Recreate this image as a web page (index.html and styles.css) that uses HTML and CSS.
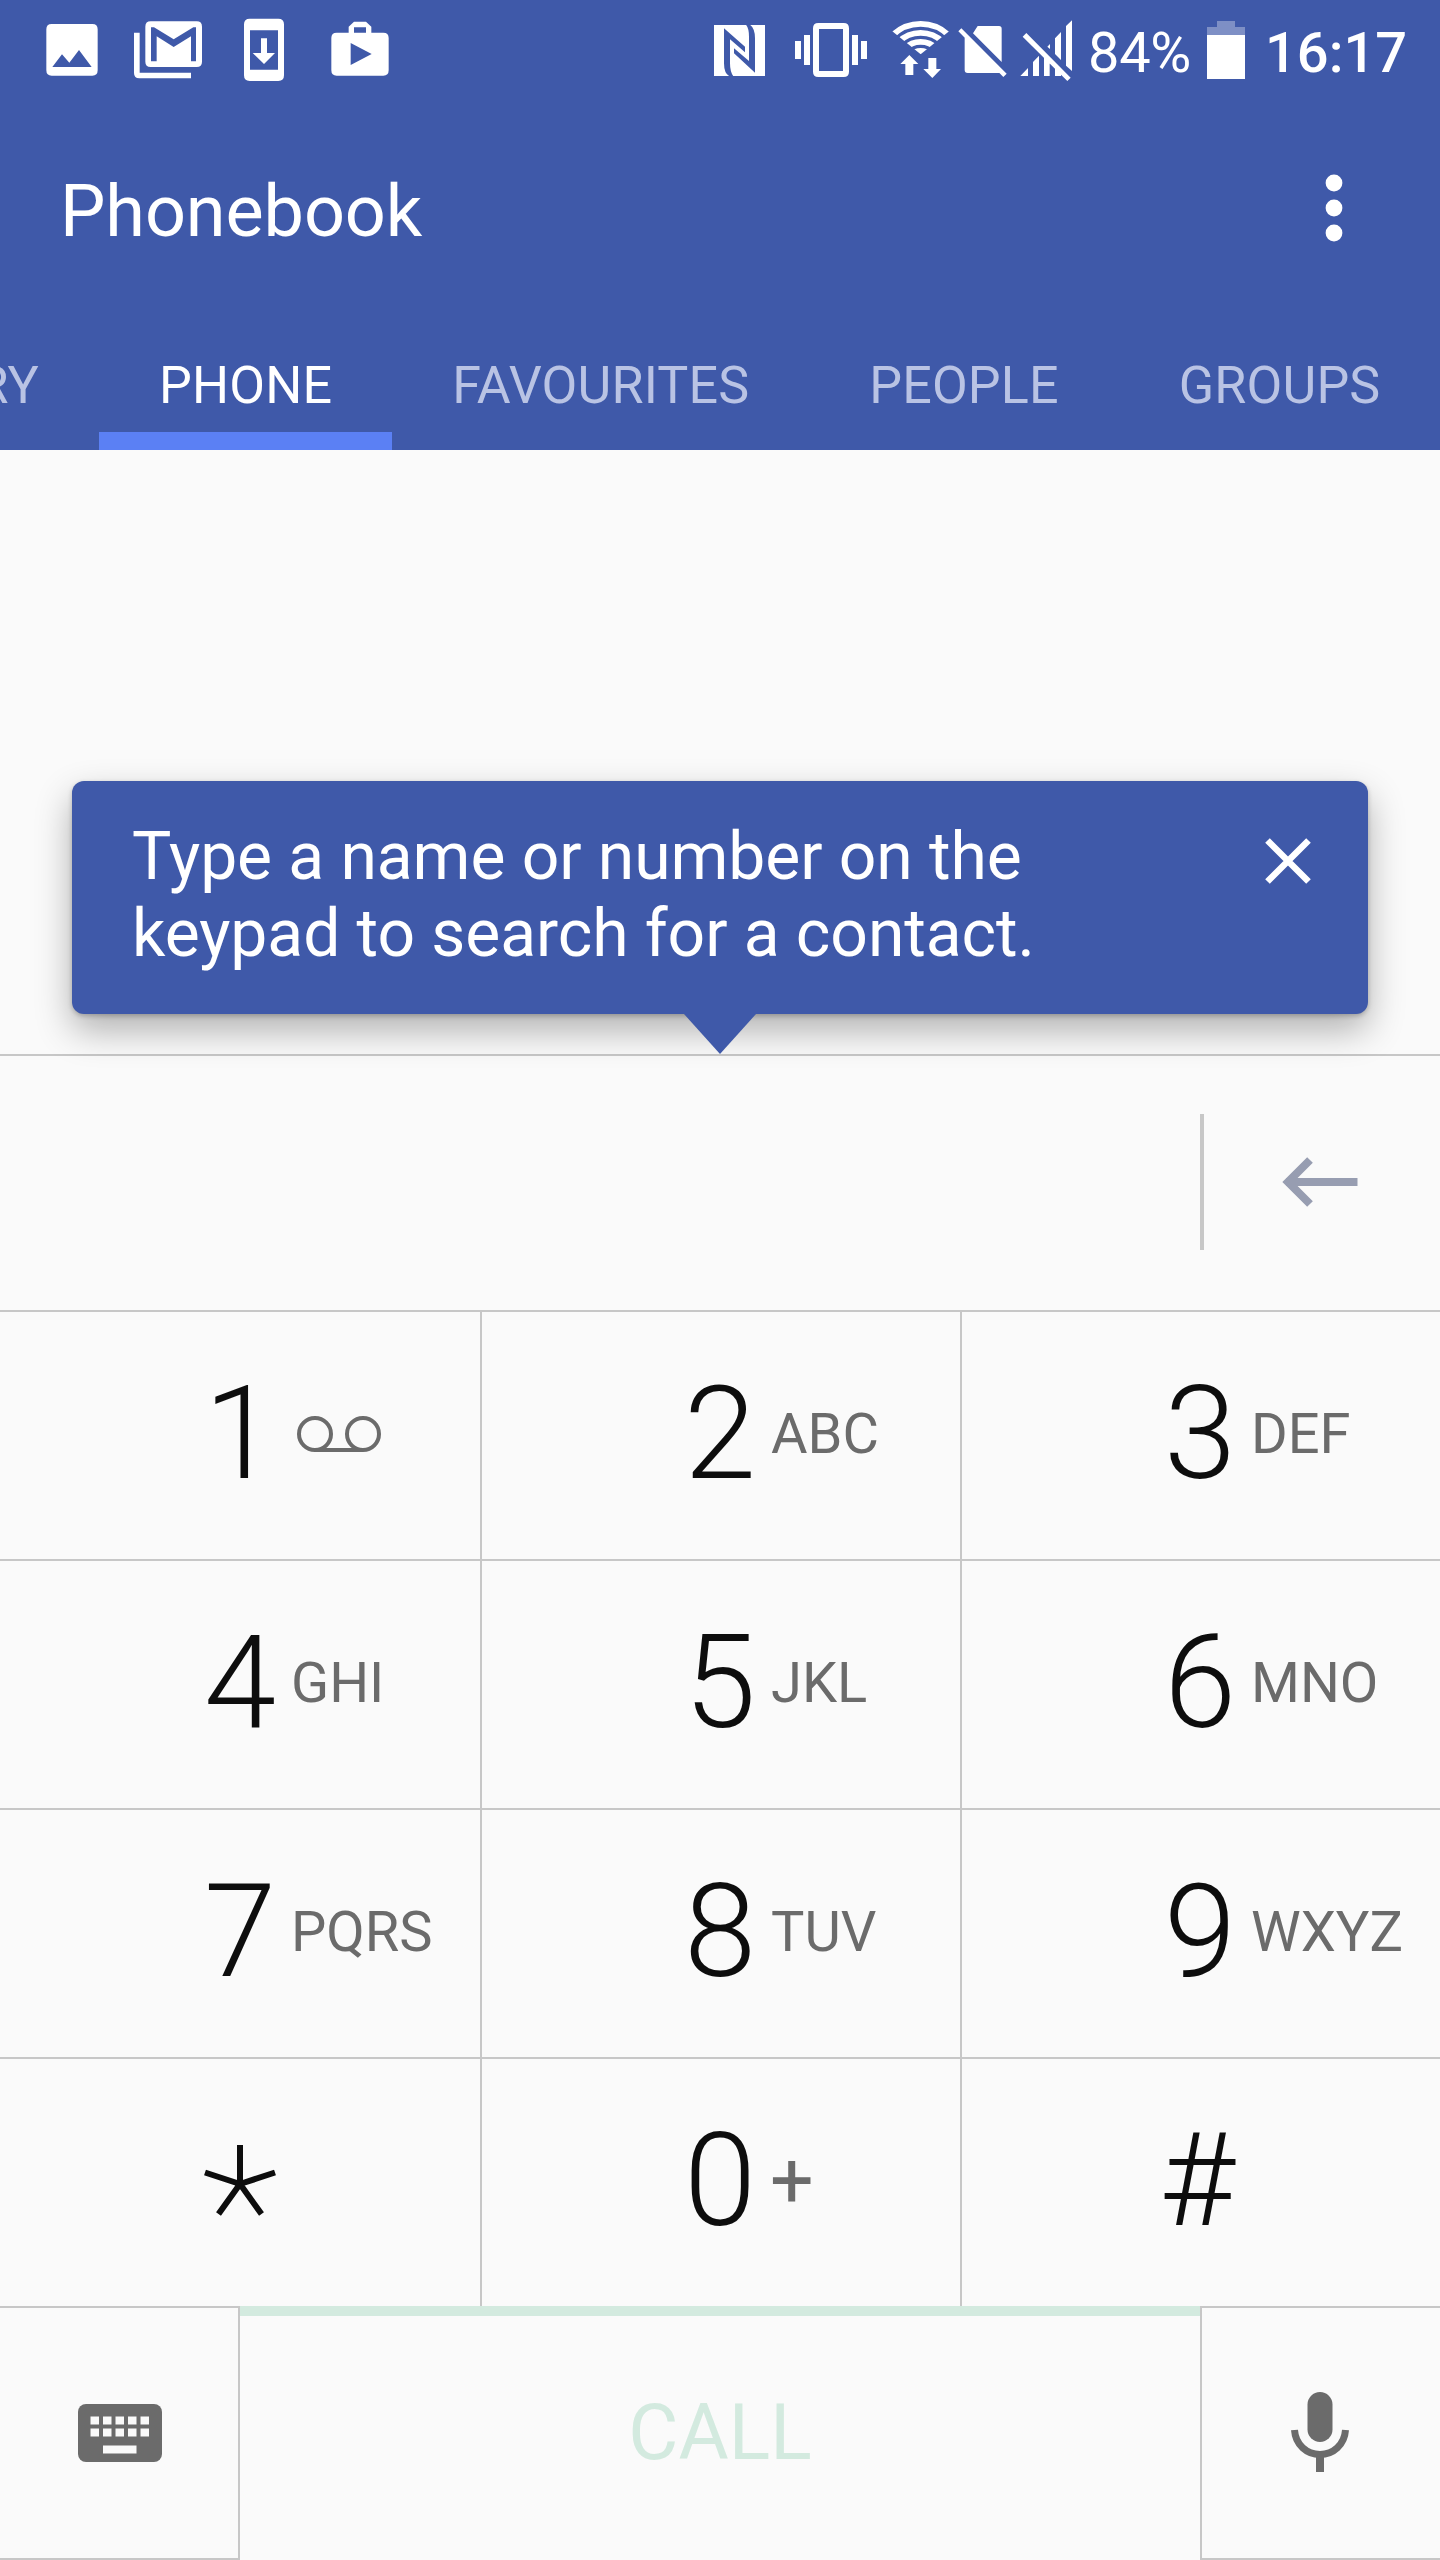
FILE: index.html
```html
<!DOCTYPE html>
<html lang="en">
<head>
<meta charset="utf-8">
<title>Phonebook</title>
<link rel="stylesheet" href="styles.css">
</head>
<body>
<div class="screen">
  <header class="header">
    <div class="status">
      <svg class="ic-photo" width="52" height="100" viewBox="138 0 156 300"><path fill-rule="evenodd" d="M155 72H277Q293 72 293 88V211Q293 227 277 227H155Q139 227 139 211V88Q139 72 155 72ZM157 201H275L237 150L208 188L186 163Z"/></svg>
      <svg class="ic-mail" width="68" height="100" viewBox="402 0 204 300"><path d="M402 98H419V218H573V235H418Q402 235 402 219Z"/><path fill-rule="evenodd" d="M452 64H590Q606 64 606 80V185Q606 201 590 201H452Q436 201 436 185V80Q436 64 452 64ZM453 82V184H470V109L521 141L573 109V184H588V82H580L521 118L462 82Z"/></svg>
      <svg class="ic-download" width="40" height="100" viewBox="732 0 120 300"><path fill-rule="evenodd" d="M749 56H835Q852 56 852 73V226Q852 243 835 243H749Q732 243 732 226V73Q732 56 749 56ZM750 91V209H834V91Z"/><path d="M783 115H801V159H825L792 192L758 159H783Z"/></svg>
      <svg class="ic-store" width="58" height="100" viewBox="993 0 174 300"><path fill-rule="evenodd" d="M1010 98H1046V80L1062 65H1098L1114 80V98H1150Q1166 98 1166 114V211Q1166 227 1150 227H1010Q994 227 994 211V114Q994 98 1010 98ZM1062 82V98H1098V82ZM1052 129V195L1115 162Z"/></svg>
      <span class="grow"></span>
      <svg class="ic-nfc" width="51" height="100" viewBox="42 0 153 300"><path d="M42 75H195V228H42Z"/><path class="cut" d="M72 85L135 140V157L90 118V190Q90 215 100 229H88Q72 220 72 190ZM165 218L102 160V145L147 183V110Q147 85 138 74H150Q165 85 165 115Z"/></svg>
      <svg class="ic-vibrate" width="72" height="100" viewBox="285 0 216 300"><path fill-rule="evenodd" d="M355 69H431Q447 69 447 85V215Q447 231 431 231H355Q339 231 339 215V85Q339 69 355 69ZM357 87V213H429V87Z"/><path d="M285 123H303V177H285ZM312 105H330V195H312ZM456 105H474V195H456ZM483 123H501V177H483Z"/></svg>
      <svg class="ic-wifi" width="58" height="100" viewBox="575 0 174 300">
        <clipPath id="fan"><path d="M661 163L537 62H785Z"/></clipPath>
        <g clip-path="url(#fan)"><g fill="none" stroke="#fff" stroke-width="17"><circle cx="661" cy="193" r="121.500"/><circle cx="661" cy="193" r="94.500"/><circle cx="661" cy="193" r="67.500"/></g><circle cx="661" cy="193" r="49"/></g>
        <path d="M627 165L654 192H639V225H615V192H600ZM684 174H708V207H722L696 234L669 207H684Z"/></svg>
      <svg class="ic-sim" width="49" height="100" viewBox="775 0 147 300"><path d="M834 78H898Q906 78 906 86V186L820 100ZM795 102L904 213Q902 219 896 219H804Q795 219 795 210ZM776 94L785 85L921 221L911 231Z"/></svg>
      <svg class="ic-signal" width="53" height="100" viewBox="960 0 159 300"><path d="M968 110L979 99L1112 233L1102 243ZM961 228L984 204V228ZM999 186L1017 167V228H999ZM1032 170L1049 186V228H1032ZM1065 202L1083 220V228H1065ZM1042 140L1050 132V147ZM1065 115L1083 96V180L1065 162ZM1098 78L1116 61V213L1098 197Z"/></svg>
      <span class="percent">84%</span>
      <svg class="ic-battery" width="38" height="100" viewBox="0 0 38 100"><path opacity=".33" d="M0 27H10V21H28V27H38V35H0Z"/><path d="M0 35H38V79H0Z"/></svg>
      <span class="clock">16:17</span>
    </div>
    <div class="titlebar">
      <h1 class="title">Phonebook</h1>
      <svg class="more" width="18" height="68" viewBox="0 0 18 68"><circle cx="9" cy="9" r="8.400"/><circle cx="9" cy="34" r="8.400"/><circle cx="9" cy="59" r="8.400"/></svg>
    </div>
    <nav class="tabs">
      <span class="tab tab-first">CALL HISTORY</span>
      <span class="tab tab-active">PHONE</span>
      <span class="tab">FAVOURITES</span>
      <span class="tab">PEOPLE</span>
      <span class="tab">GROUPS</span>
    </nav>
  </header>
  <main class="results">
    <div class="tip">
      <p class="tip-text">Type a name or number on the<br>keypad to search for a contact.</p>
      <svg class="close" width="46" height="46" viewBox="0 0 46 46"><path d="M2.500 2.500L43.500 43.500M43.500 2.500L2.500 43.500"/></svg>
      <span class="tip-arrow"></span>
    </div>
  </main>
  <section class="entry">
    <span class="entry-rule"></span>
    <svg class="back" width="76" height="52" viewBox="0 0 76 52"><path d="M4 26H75.500M28 4L6 26L28 48"/></svg>
  </section>
  <section class="keypad">
    <div class="key"><span class="digit">1</span><svg class="voicemail" width="84" height="36" viewBox="0 0 84 36"><circle cx="18" cy="18" r="16"/><circle cx="66" cy="18" r="16"/><path d="M18 34H66"/></svg></div>
    <div class="key"><span class="digit">2</span><span class="letters">ABC</span></div>
    <div class="key"><span class="digit">3</span><span class="letters">DEF</span></div>
    <div class="key"><span class="digit">4</span><span class="letters">GHI</span></div>
    <div class="key"><span class="digit">5</span><span class="letters">JKL</span></div>
    <div class="key"><span class="digit">6</span><span class="letters">MNO</span></div>
    <div class="key"><span class="digit">7</span><span class="letters">PQRS</span></div>
    <div class="key"><span class="digit">8</span><span class="letters">TUV</span></div>
    <div class="key"><span class="digit">9</span><span class="letters">WXYZ</span></div>
    <div class="key"><svg class="star" width="100" height="247" viewBox="0 0 100 247"><path d="M50 125V86M50 125L15 113.500M50 125L85 113.500M50 125L28.500 155M50 125L71.500 155"/></svg></div>
    <div class="key"><span class="digit">0</span><span class="letters plus">+</span></div>
    <div class="key"><span class="digit hash">#</span></div>
  </section>
  <footer class="actions">
    <div class="action action-left"><svg width="84" height="58" viewBox="0 0 84 58"><rect width="84" height="58" y="0" rx="8" fill="#6b6b6b"/><path fill="#fafafa" d="M12.500 12.500h8.500v8h-8.500zM25 12.500h8.500v8h-8.500zM37.500 12.500h8.500v8h-8.500zM50 12.500h8.500v8h-8.500zM62.500 12.500h8.500v8h-8.500zM12.500 24.500h8.500v8h-8.500zM25 24.500h8.500v8h-8.500zM37.500 24.500h8.500v8h-8.500zM50 24.500h8.500v8h-8.500zM62.500 24.500h8.500v8h-8.500zM25 41.500h33.500v8h-33.500z"/></svg></div>
    <div class="call">CALL</div>
    <div class="action action-right"><svg width="58" height="80" viewBox="0 0 58 80"><rect x="16.500" y="0" width="25" height="50" rx="12.500" fill="#6b6b6b"/><path fill="none" stroke="#6b6b6b" stroke-width="7" d="M3.500 38C4.500 53 16 62.500 29 62.500S53.500 53 54.500 38"/><path fill="#6b6b6b" d="M25 64h8v16h-8z"/></svg></div>
  </footer>
</div>
</body>
</html>
```
FILE: styles.css
```css
* { box-sizing: border-box; }
body { margin: 0; background: #fafafa; font-family: Roboto, "Liberation Sans", sans-serif; }
svg { display: block; flex: none; }
.screen { width: 1440px; height: 2560px; display: flex; flex-direction: column; overflow: hidden; background: #fafafa; }

.header { height: 450px; background: #3f59a9; color: #fff; display: flex; flex-direction: column; }
.header svg { fill: #fff; }
.status { height: 100px; display: flex; align-items: flex-start; padding: 0 31px 0 46px; white-space: nowrap; }
.header .cut { fill: #3f59a9; }
.grow { flex: 1; }
.ic-mail { margin-left: 36px; }
.ic-download { margin-left: 42px; }
.ic-store { margin-left: 47px; }
.ic-vibrate { margin-left: 30px; }
.ic-wifi { margin-left: 25px; }
.ic-sim { margin-left: 8px; }
.ic-signal { margin-left: 13px; }
.percent { width: 118px; padding-left: 15px; font-size: 56px; line-height: 107px; letter-spacing: -.3px; }
.ic-battery { margin-left: 16px; }
.clock { width: 164px; padding-left: 20px; font-size: 56px; font-weight: 500; line-height: 107px; }

.titlebar { height: 232px; display: flex; align-items: flex-start; justify-content: space-between; padding: 74px 97px 0 60px; }
.title { margin: 0; font-size: 72px; font-weight: 400; line-height: 76px; letter-spacing: -.1px; }

.tabs { height: 118px; display: flex; font-size: 52px; line-height: 108px; letter-spacing: .17px; color: #b9c3e4; white-space: nowrap; }
.tab { flex: none; height: 118px; padding: 0 60px; }
.tab-first { width: 99px; padding-left: 0; overflow: hidden; display: flex; justify-content: flex-end; }
.tab-active { color: #fff; border-bottom: 18px solid #5b80f4; }

.results { height: 606px; padding: 331px 72px 0; border-bottom: 2px solid #c7c7c7; }
.tip { position: relative; height: 233px; padding: 37px 57px 0 60px; display: flex; justify-content: space-between; background: #3f59a9; border-radius: 12px; color: #fff; box-shadow: 0 16px 36px rgba(0,0,0,.3), 0 2px 5px rgba(0,0,0,.22); }
.tip-text { margin: 0; font-size: 66px; line-height: 77px; letter-spacing: -.08px; white-space: nowrap; }
.close { margin-top: 20px; fill: none; stroke: #fff; stroke-width: 6.500px; }
.tip-arrow { position: absolute; left: 612px; top: 233px; border: solid transparent; border-width: 40px 36px 0; border-top-color: #3f59a9; }

.entry { height: 256px; display: flex; justify-content: flex-end; align-items: center; padding: 0 82px 2px 0; border-bottom: 2px solid #c7c7c7; }
.entry-rule { width: 4px; height: 136px; background: #c7c7c7; margin-right: 78px; }
.back { fill: none; stroke: #979db1; stroke-width: 8px; }

.keypad { height: 996px; display: grid; grid-template-columns: repeat(3, 480px); grid-template-rows: repeat(4, 249px); }
.key { display: flex; align-items: flex-start; padding-left: 190px; border-bottom: 2px solid #c7c7c7; line-height: 243px; color: #0d0d0d; white-space: nowrap; }
.key:not(:nth-child(3n+1)) { border-left: 2px solid #c7c7c7; padding-left: 188px; }
.digit { width: 100px; text-align: center; font-size: 130px; font-weight: 300; }
.letters { padding-left: 1px; font-size: 56px; line-height: 245px; color: #6b6b6b; }
.plus { padding-left: 0; font-size: 77px; }
.hash { width: 94px; }
.voicemail { margin: 104px 0 0 7px; fill: none; stroke: #6b6b6b; stroke-width: 4px; }
.star { fill: none; stroke: #0d0d0d; stroke-width: 6px; }

.actions { height: 252px; display: flex; }
.action { width: 240px; height: 254px; margin-top: -2px; border: 2px solid #c7c7c7; display: flex; align-items: center; justify-content: center; }
.action-left { border-left: 0; padding-left: 2px; }
.action-right { border-right: 0; padding: 0 2px 2px 0; }
.call { width: 960px; height: 254px; margin-top: -2px; border-top: 10px solid #d3eadf; background: #fafafa; text-align: center; color: #d3eadf; font-size: 77px; line-height: 234px; }
```
